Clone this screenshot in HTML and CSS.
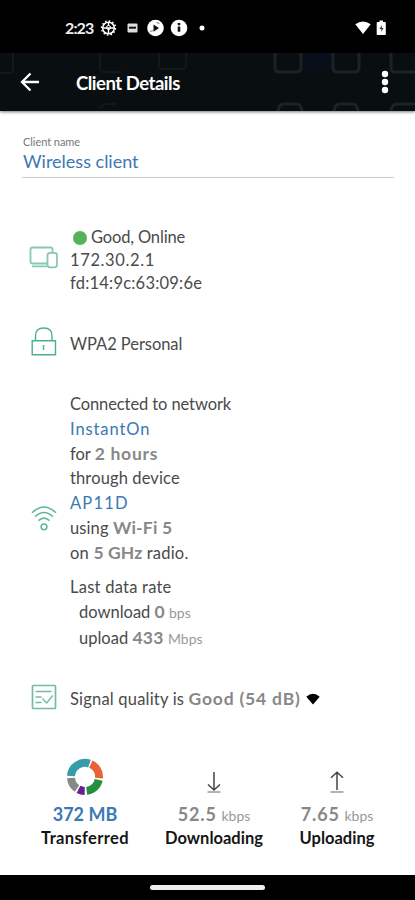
FILE: index.html
```html
<!DOCTYPE html>
<html lang="en">
<head>
<meta charset="utf-8">
<title>Client Details</title>
<link rel="stylesheet" href="styles.css">
</head>
<body>
<div class="status">
  <span class="clock">2:23</span>
  <svg class="status-icons" width="110" height="20" viewBox="0 0 110 20">
    <g fill="none" stroke="#fff">
      <circle cx="8.500" cy="10" r="5.800" stroke-width="1.500"/>
      <circle cx="8.500" cy="10" r="7" stroke-width="1.400" stroke-dasharray="1.600 2.060"/>
      <path d="M3 10h11M8.500 10v5M8.500 4.500v3" stroke-width="1.400"/>
      <circle cx="8.500" cy="9.500" r="2" stroke-width="1"/>
    </g>
    <rect x="27.500" y="5.500" width="10" height="9" rx="1" fill="#ddd"/>
    <path d="M29 8.700h7v2h-7z" fill="#111"/>
    <circle cx="55.500" cy="10" r="8.300" fill="#fff"/>
    <path d="M53.500 6.500l5.500 3.600-5.500 3.600z" fill="#111"/>
    <path d="M50 13.500l3-1M56.500 4.500l3 1" stroke="#777"/>
    <circle cx="79" cy="10" r="8.300" fill="#fff"/>
    <path d="M77.700 8.400h2.600v5.400h-2.600zM77.700 5h2.600v2.200h-2.600z" fill="#111"/>
    <circle cx="102" cy="10" r="2.500" fill="#fff"/>
  </svg>
  <svg class="status-right" width="34" height="20" viewBox="0 0 34 20">
    <path d="M.3 4.200Q8-1.200 15.700 4.200L8 14z" fill="#fff"/>
    <path d="M22.500 2h2V.5h3.500V2h2q.8 0 .8.800v11.400q0 .8-.8.800h-7.500q-.8 0-.8-.8V2.800q0-.8.8-.8z" fill="#fff"/>
    <path d="M27 5l-2.500 4h2l-.3 3 2.300-4h-1.700z" fill="#333"/>
  </svg>
</div>
<header class="bar">
  <svg class="bar-art" width="415" height="58" viewBox="0 0 415 58">
    <g fill="none" stroke="#1c2325" stroke-width="3">
      <path d="M275 0v15q0 4 4 4h17q5 0 5-4V0M333 0v15q0 4 4 4h17q5 0 5-4V0M391 0v15q0 4 4 4h20M278 58q1-7 6-7h13q4 0 5 7M334 58q1-7 6-7h13q4 0 5 7M391 58q1-7 6-7h18"/>
      <path d="M0 20h10q3 0 3-4V0M100 0v15q0 4 4 4h17M159 0v12q0 4 4 4h19q4 0 4-4V0M100 56q2-5 6-5h10" stroke="#12191c" stroke-width="2"/>
    </g>
    <path d="M303 0h28v17h-28z" fill="#080e1a"/>
  </svg>
  <svg class="back" width="20" height="20" viewBox="0 0 20 20" fill="none" stroke="#fff" stroke-width="2.300"><path d="M19 10H2M10.500 1.500L2 10l8.500 8.500"/></svg>
  <h1>Client Details</h1>
  <svg class="more" width="8" height="24" viewBox="0 0 8 24" fill="#fff"><circle cx="4" cy="4" r="3.200"/><circle cx="4" cy="12" r="3.200"/><circle cx="4" cy="20" r="3.200"/></svg>
</header>
<main>
  <div class="field">
    <div class="label">Client name</div>
    <div class="value link">Wireless client</div>
  </div>
  <section class="row client">
    <svg width="30" height="24" viewBox="0 0 30 24" fill="none" stroke="#86c8b0" stroke-width="1.800"><path d="M18 17.500H3.500q-2 0-2-2v-12q0-2 2-2h18q2 0 2 2V6M3 20.300h15"/><rect x="18.500" y="6.800" width="9.500" height="14.500" rx="2.500"/></svg>
    <div class="text">
      <p class="t-good"><i class="dot"></i><span>Good, Online</span></p>
      <p class="t-ip">172.30.2.1</p>
      <p class="t-mac">fd:14:9c:63:09:6e</p>
    </div>
  </section>
  <section class="row security">
    <svg width="26" height="30" viewBox="0 0 26 30" fill="none" stroke="#4db08b" stroke-width="1.400"><path d="M1.200 13.800h23.300v14H1.200zM4.500 13.500V9q0-8 8.300-8T21 9v4.500M12.500 18v5"/></svg>
    <div class="text"><p class="t-wpa">WPA2 Personal</p></div>
  </section>
  <section class="row network">
    <svg width="26" height="28" viewBox="0 0 26 28" fill="none" stroke="#5cb895" stroke-width="1.500"><path d="M1 7.800Q13-3.800 25 7.800M4 11.800q9-8.600 18 0M7.500 15.600q5.500-5 11 0"/><circle cx="13" cy="21.800" r="2.900"/></svg>
    <div class="text">
      <p class="t-conn">Connected to network</p>
      <p class="t-inst link">InstantOn</p>
      <p class="t-for">for <b>2 hours</b></p>
      <p class="t-thr">through device</p>
      <p class="t-ap link">AP11D</p>
      <p class="t-using">using <b>Wi-Fi 5</b></p>
      <p class="t-on">on <b>5 GHz</b> radio.</p>
      <p class="t-last">Last data rate</p>
      <p class="t-down">download <b>0</b> <small>bps</small></p>
      <p class="t-up">upload <b>433</b> <small>Mbps</small></p>
    </div>
  </section>
  <section class="row signal">
    <svg width="26" height="26" viewBox="0 0 26 26" fill="none" stroke="#72bda0" stroke-width="1.700"><rect x="1.500" y="1.500" width="23" height="23" rx="1"/><path d="M4.500 7.500h16M4.500 13h6M4.500 18.500h6M11.500 14.500l4.200 4.500 6-7.500" stroke-width="1.400"/></svg>
    <div class="text"><p class="t-sig">Signal quality is <b>Good (54 dB)</b><svg width="14" height="12" viewBox="0 0 14 12"><path d="M.3 3.800Q7-2.200 13.700 3.800L7 11.500z" fill="#000"/></svg></p></div>
  </section>
  <section class="stats">
    <div class="stat">
      <svg width="38" height="38" viewBox="0 0 38 38" fill="none" stroke-width="8">
        <path d="M5 18A14 14 0 0 1 23.500 5.600" stroke="#369ca9"/>
        <path d="M24.800 6.200A14 14 0 0 1 33 20.200" stroke="#e96231"/>
        <path d="M32.700 21.900A14 14 0 0 1 20.700 32.900" stroke="#268f3e"/>
        <path d="M18.700 33A14 14 0 0 1 12.500 31.400" stroke="#68208c"/>
        <path d="M11 30.500A14 14 0 0 1 5 20" stroke="#888"/>
      </svg>
      <p class="num link s-mb"><b>372 MB</b></p>
      <p class="name s-tr">Transferred</p>
    </div>
    <div class="stat">
      <svg width="38" height="38" viewBox="0 0 38 38" fill="none"><path d="M19 14v18M13 26.500l6 5.500 6-5.500" stroke="#444" stroke-width="1.500"/><path d="M12.500 34h13" stroke="#999" stroke-width="1.500"/></svg>
      <p class="num s-dn"><b>52.5</b> <small>kbps</small></p>
      <p class="name s-dl">Downloading</p>
    </div>
    <div class="stat">
      <svg width="38" height="38" viewBox="0 0 38 38" fill="none"><path d="M19 32V14M13 19.800l6-5.500 6 5.500" stroke="#444" stroke-width="1.500"/><path d="M12.500 34h13" stroke="#999" stroke-width="1.500"/></svg>
      <p class="num s-upn"><b>7.65</b> <small>kbps</small></p>
      <p class="name s-ul">Uploading</p>
    </div>
  </section>
</main>
<footer><i></i></footer>
</body>
</html>
```

FILE: styles.css
```css
* { box-sizing: border-box; margin: 0; padding: 0; }
body { width: 415px; height: 900px; display: flex; flex-direction: column; overflow: hidden; background: #fff; color: #4a4a4a; font: 16.5px/24px Lato, sans-serif; font-variant-ligatures: none; }
svg { display: block; flex: none; }
p, h1 { white-space: nowrap; }
.status { height: 53px; flex: none; background: #000; color: #fff; display: flex; align-items: flex-start; padding: 18px 26px 0 65px; }
.clock { font-weight: 700; font-size: 16px; line-height: 20px; width: 35px; letter-spacing: -.9px; color: #eee; }
.status-right { margin-left: auto; margin-top: 2px; }
.bar { height: 58px; flex: none; display: flex; align-items: center; position: relative; background: #090e10; box-shadow: 0 1px 3px #0008; padding: 0 26px 0 20px; }
.bar-art { position: absolute; inset: 0; }
.back, .more, .bar h1 { position: relative; }
.bar h1 { color: #fff; font-size: 18.5px; font-weight: 700; line-height: 24px; margin-left: 36px; margin-top: 2px; letter-spacing: -.48px; }
.more { margin-left: auto; }
main { height: 764px; flex: none; padding: 22px 21px 0 22px; }
.field { height: 45px; border-bottom: 1px solid #ccc; padding-left: 1px; }
.label { font-size: 11px; line-height: 17px; color: #777; letter-spacing: -.05px; }
.value { font-size: 18px; line-height: 22px; }
.link { color: #3b78b5; }
.row { display: grid; grid-template-columns: 48px 1fr; }
.row > svg { justify-self: start; }
.client { margin-top: 48px; }
.client > svg { margin: 20px 0 0 7px; }
.client p { height: 23px; line-height: 23px; }
.t-good { display: flex; align-items: center; letter-spacing: -.15px; }
.t-ip { letter-spacing: .62px; }
.t-mac { letter-spacing: .21px; }
.dot { width: 14px; height: 14px; border-radius: 50%; background: #54b15c; margin: 0 4px 0 3px; }
.security { margin-top: 32px; }
.security > svg { margin: 0 0 0 9px; }
.security p { line-height: 34px; letter-spacing: -.06px; }
.network { margin-top: 31px; }
.network > svg { margin: 113px 0 0 9px; }
.network p { height: 24.8px; line-height: 24.8px; }
.network .t-conn { letter-spacing: -.1px; }
.network .t-inst { letter-spacing: .9px; }
.network .t-thr { letter-spacing: .12px; }
.network .t-ap { letter-spacing: 1.2px; }
.t-for b { letter-spacing: .7px; }
.t-using { letter-spacing: .1px; }
.t-using b { letter-spacing: .2px; }
.t-on { letter-spacing: .2px; }
.t-on b { letter-spacing: .1px; }
.t-up b { letter-spacing: .3px; }
.network .t-last { margin-top: 9px; height: 25.5px; letter-spacing: .24px; }
.network .t-down { height: 25.5px; }
.t-down, .t-up { padding-left: 9px; }
b { color: #888; font-weight: 700; }
.text b { font-size: 17.5px; line-height: 1; }
.link b { color: #3b78b5; }
small { font-size: 14px; line-height: 1; color: #999; }
.signal { margin-top: 34px; }
.signal > svg { margin: 0 0 0 9px; }
.signal p { height: 31px; line-height: 31px; letter-spacing: .2px; }
.signal b { letter-spacing: .8px; }
.signal p svg { display: inline-block; margin-left: 5px; }
.stats { display: grid; grid-template-columns: 126px 132px 114px; margin-top: 43px; }
.stat { display: flex; flex-direction: column; align-items: center; }
.num { font-size: 18px; height: 24px; line-height: 24px; margin-top: 6px; }
.s-dn b, .s-upn b { letter-spacing: .9px; }
.name { font-size: 16.5px; line-height: 25px; font-weight: 700; color: #151515; }
.s-tr { letter-spacing: .35px; }
footer { height: 25px; flex: none; background: #000; display: flex; justify-content: center; padding-top: 10px; }
footer i { width: 115px; height: 5px; border-radius: 3px; background: #eee; }
```
